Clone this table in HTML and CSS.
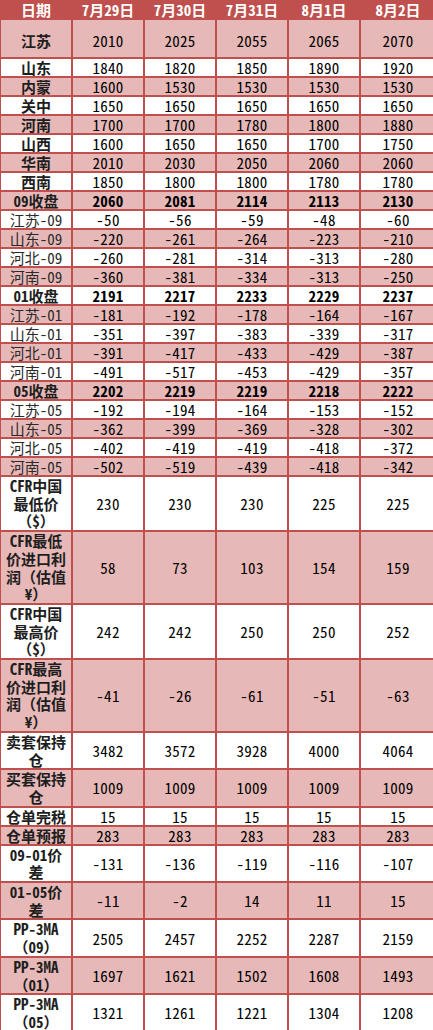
FILE: index.html
```html
<!DOCTYPE html>
<html lang="zh-CN">
<head>
<meta charset="utf-8">
<title>PP价格表</title>
<link rel="stylesheet" href="styles.css">
</head>
<body>
<table class="sheet">
<colgroup><col class="c"><col class="c"><col class="c"><col class="c"><col class="c"><col class="c last"></colgroup>
<thead>
<tr class="head"><th>日期</th><th>7月29日</th><th>7月30日</th><th>7月31日</th><th>8月1日</th><th>8月2日</th></tr>
</thead>
<tbody>
<tr class="p tall"><th>江苏</th><td>2010</td><td>2025</td><td>2055</td><td>2065</td><td>2070</td></tr>
<tr class="w"><th>山东</th><td>1840</td><td>1820</td><td>1850</td><td>1890</td><td>1920</td></tr>
<tr class="p"><th>内蒙</th><td>1600</td><td>1530</td><td>1530</td><td>1530</td><td>1530</td></tr>
<tr class="w"><th>关中</th><td>1650</td><td>1650</td><td>1650</td><td>1650</td><td>1650</td></tr>
<tr class="p"><th>河南</th><td>1700</td><td>1700</td><td>1780</td><td>1800</td><td>1880</td></tr>
<tr class="w"><th>山西</th><td>1600</td><td>1650</td><td>1650</td><td>1700</td><td>1750</td></tr>
<tr class="p"><th>华南</th><td>2010</td><td>2030</td><td>2050</td><td>2060</td><td>2060</td></tr>
<tr class="w"><th>西南</th><td>1850</td><td>1800</td><td>1800</td><td>1780</td><td>1780</td></tr>
<tr class="p b"><th>09收盘</th><td>2060</td><td>2081</td><td>2114</td><td>2113</td><td>2130</td></tr>
<tr class="w"><th class="n">江苏-09</th><td>-50</td><td>-56</td><td>-59</td><td>-48</td><td>-60</td></tr>
<tr class="p"><th class="n">山东-09</th><td>-220</td><td>-261</td><td>-264</td><td>-223</td><td>-210</td></tr>
<tr class="w"><th class="n">河北-09</th><td>-260</td><td>-281</td><td>-314</td><td>-313</td><td>-280</td></tr>
<tr class="p"><th class="n">河南-09</th><td>-360</td><td>-381</td><td>-334</td><td>-313</td><td>-250</td></tr>
<tr class="w b"><th>01收盘</th><td>2191</td><td>2217</td><td>2233</td><td>2229</td><td>2237</td></tr>
<tr class="p"><th class="n">江苏-01</th><td>-181</td><td>-192</td><td>-178</td><td>-164</td><td>-167</td></tr>
<tr class="w"><th class="n">山东-01</th><td>-351</td><td>-397</td><td>-383</td><td>-339</td><td>-317</td></tr>
<tr class="p"><th class="n">河北-01</th><td>-391</td><td>-417</td><td>-433</td><td>-429</td><td>-387</td></tr>
<tr class="w"><th class="n">河南-01</th><td>-491</td><td>-517</td><td>-453</td><td>-429</td><td>-357</td></tr>
<tr class="p b"><th>05收盘</th><td>2202</td><td>2219</td><td>2219</td><td>2218</td><td>2222</td></tr>
<tr class="w"><th class="n">江苏-05</th><td>-192</td><td>-194</td><td>-164</td><td>-153</td><td>-152</td></tr>
<tr class="p"><th class="n">山东-05</th><td>-362</td><td>-399</td><td>-369</td><td>-328</td><td>-302</td></tr>
<tr class="w"><th class="n">河北-05</th><td>-402</td><td>-419</td><td>-419</td><td>-418</td><td>-372</td></tr>
<tr class="p"><th class="n">河南-05</th><td>-502</td><td>-519</td><td>-439</td><td>-418</td><td>-342</td></tr>
<tr class="w"><th class="ml">CFR中国<br>最低价<br>（$）</th><td>230</td><td>230</td><td>230</td><td>225</td><td>225</td></tr>
<tr class="p"><th class="ml">CFR最低<br>价进口利<br>润（估值<br>¥）</th><td>58</td><td>73</td><td>103</td><td>154</td><td>159</td></tr>
<tr class="w"><th class="ml">CFR中国<br>最高价<br>（$）</th><td>242</td><td>242</td><td>250</td><td>250</td><td>252</td></tr>
<tr class="p"><th class="ml">CFR最高<br>价进口利<br>润（估值<br>¥）</th><td>-41</td><td>-26</td><td>-61</td><td>-51</td><td>-63</td></tr>
<tr class="w"><th class="ml">卖套保持<br>仓</th><td>3482</td><td>3572</td><td>3928</td><td>4000</td><td>4064</td></tr>
<tr class="p"><th class="ml">买套保持<br>仓</th><td>1009</td><td>1009</td><td>1009</td><td>1009</td><td>1009</td></tr>
<tr class="w"><th>仓单完税</th><td>15</td><td>15</td><td>15</td><td>15</td><td>15</td></tr>
<tr class="p"><th>仓单预报</th><td>283</td><td>283</td><td>283</td><td>283</td><td>283</td></tr>
<tr class="w"><th class="ml">09-01价<br>差</th><td>-131</td><td>-136</td><td>-119</td><td>-116</td><td>-107</td></tr>
<tr class="p"><th class="ml">01-05价<br>差</th><td>-11</td><td>-2</td><td>14</td><td>11</td><td>15</td></tr>
<tr class="w"><th class="ml">PP-3MA<br>（09）</th><td>2505</td><td>2457</td><td>2252</td><td>2287</td><td>2159</td></tr>
<tr class="p"><th class="ml">PP-3MA<br>（01）</th><td>1697</td><td>1621</td><td>1502</td><td>1608</td><td>1493</td></tr>
<tr class="w"><th class="ml">PP-3MA<br>（05）</th><td>1321</td><td>1261</td><td>1221</td><td>1304</td><td>1208</td></tr>
</tbody>
</table>
</body>
</html>
```
FILE: styles.css
```css
html, body {
  margin: 0;
  padding: 0;
  background: #ffffff;
  overflow: hidden;
}

.sheet {
  border-collapse: collapse;
  table-layout: fixed;
  width: 438px;
  margin: -1px 0 0 -1px;
  font-family: "Noto Sans Mono CJK SC", "Noto Sans CJK SC", "DejaVu Sans Mono", monospace;
  font-size: 15px;
  color: #000;
}

.sheet .c {
  width: 72px;
}

.sheet .c.last {
  width: 76px;
}

.sheet th,
.sheet td {
  border: 2px solid #c0504d;
  padding: 0;
  line-height: 17px;
  text-align: center;
  vertical-align: middle;
  white-space: nowrap;
  overflow: hidden;
}

.sheet tbody td {
  font-weight: 400;
  letter-spacing: 0.3px;
}

.sheet tbody th {
  font-weight: 700;
  color: #1e1e1e;
}

.sheet tbody th.n {
  font-weight: 400;
  color: #2a2a2a;
}

.sheet th.ml {
  line-height: 17.7px;
  white-space: normal;
}

.head th {
  background: #c0504d;
  color: #ffffff;
  font-weight: 700;
  line-height: 17px;
}

.p th,
.p td {
  background: #e6b8b7;
}

.w th,
.w td {
  background: #ffffff;
}

.sheet tbody .b td {
  font-weight: 700;
}

.tall th,
.tall td {
  padding: 12px 0 8px;
}
```
